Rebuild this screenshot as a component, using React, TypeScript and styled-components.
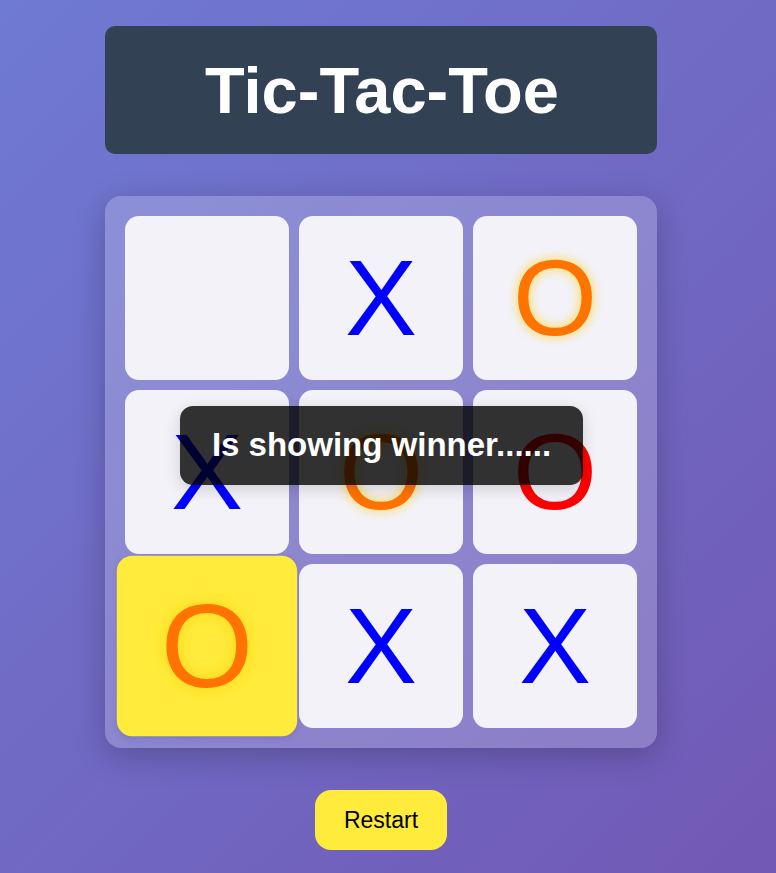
import React from "react";
import styled, { createGlobalStyle, css } from "styled-components";

const GlobalStyle = createGlobalStyle`
  html, body {
    margin: 0;
    padding: 0;
  }
  body {
    min-height: 873px;
    background: linear-gradient(135deg, #6f7ad3 0%, #7159b5 100%);
    font-family: "Liberation Sans", Arial, sans-serif;
  }
`;

const Page = styled.main`
  display: flex;
  flex-direction: column;
  align-items: center;
  padding-top: 26px;
  gap: 42px;
  width: 762px;
`;

const TitleBar = styled.header`
  width: 552px;
  height: 128px;
  box-sizing: border-box;
  background: #334155;
  border-radius: 10px;
  display: flex;
  align-items: center;
  justify-content: center;
`;

const Title = styled.h1`
  margin: 0;
  color: #ffffff;
  font-size: 65px;
  font-weight: 700;
  padding-left: 2px;
`;

const Board = styled.section`
  position: relative;
  width: 552px;
  box-sizing: border-box;
  padding: 20px;
  border-radius: 16px;
  background: rgba(255, 255, 255, 0.2);
  box-shadow: 0 8px 32px rgba(0, 0, 0, 0.22);
  display: grid;
  grid-template-columns: repeat(3, 164px);
  grid-auto-rows: 164px;
  gap: 10px;
`;

type Mark = "X" | "O" | "";
type Tone = "blue" | "orange" | "red";

const Cell = styled.div<{ $win?: boolean }>`
  border-radius: 14px;
  background: #f3f2f9;
  display: flex;
  align-items: center;
  justify-content: center;
  font-family: "Liberation Sans", Arial, sans-serif;
  font-size: 108px;
  line-height: 1;
  ${(p) =>
    p.$win &&
    css`
      background: #ffeb3b;
      transform: scale(1.1);
      transform-origin: 50% 50%;
      box-shadow: 0 2px 6px rgba(0, 0, 0, 0.08);
    `}
`;

const Glyph = styled.span<{ $tone: Tone }>`
  display: block;
  color: ${(p) =>
    p.$tone === "blue" ? "#0000ff" : p.$tone === "red" ? "#ff0000" : "#ff7300"};
  ${(p) =>
    p.$tone === "orange" &&
    css`
      text-shadow: 0 0 12px rgba(255, 205, 0, 0.75);
    `}
`;

const Overlay = styled.div`
  position: absolute;
  left: 75px;
  top: 210px;
  width: 403px;
  height: 79px;
  box-sizing: border-box;
  border-radius: 13px;
  background: rgba(0, 0, 0, 0.8);
  box-shadow: 0 4px 16px rgba(0, 0, 0, 0.15);
  color: #ffffff;
  font-size: 33px;
  font-weight: 700;
  display: flex;
  align-items: center;
  justify-content: center;
  padding-bottom: 2px;
`;

const RestartButton = styled.button`
  width: 132px;
  height: 60px;
  border: none;
  border-radius: 16px;
  background: #ffeb3b;
  color: #000;
  font-family: "Liberation Sans", Arial, sans-serif;
  font-size: 23px;
  cursor: pointer;
`;

const cells: { mark: Mark; tone: Tone; win?: boolean }[] = [
  { mark: "", tone: "blue" },
  { mark: "X", tone: "blue" },
  { mark: "O", tone: "orange" },
  { mark: "X", tone: "blue" },
  { mark: "O", tone: "orange" },
  { mark: "O", tone: "red" },
  { mark: "O", tone: "orange", win: true },
  { mark: "X", tone: "blue" },
  { mark: "X", tone: "blue" },
];

export default function App() {
  return (
    <>
      <GlobalStyle />
      <Page>
        <TitleBar>
          <Title>Tic-Tac-Toe</Title>
        </TitleBar>
        <Board>
          {cells.map((c, i) => (
            <Cell key={i} $win={c.win}>
              {c.mark && <Glyph $tone={c.tone}>{c.mark}</Glyph>}
            </Cell>
          ))}
          <Overlay>Is showing winner......</Overlay>
        </Board>
        <RestartButton>Restart</RestartButton>
      </Page>
    </>
  );
}
